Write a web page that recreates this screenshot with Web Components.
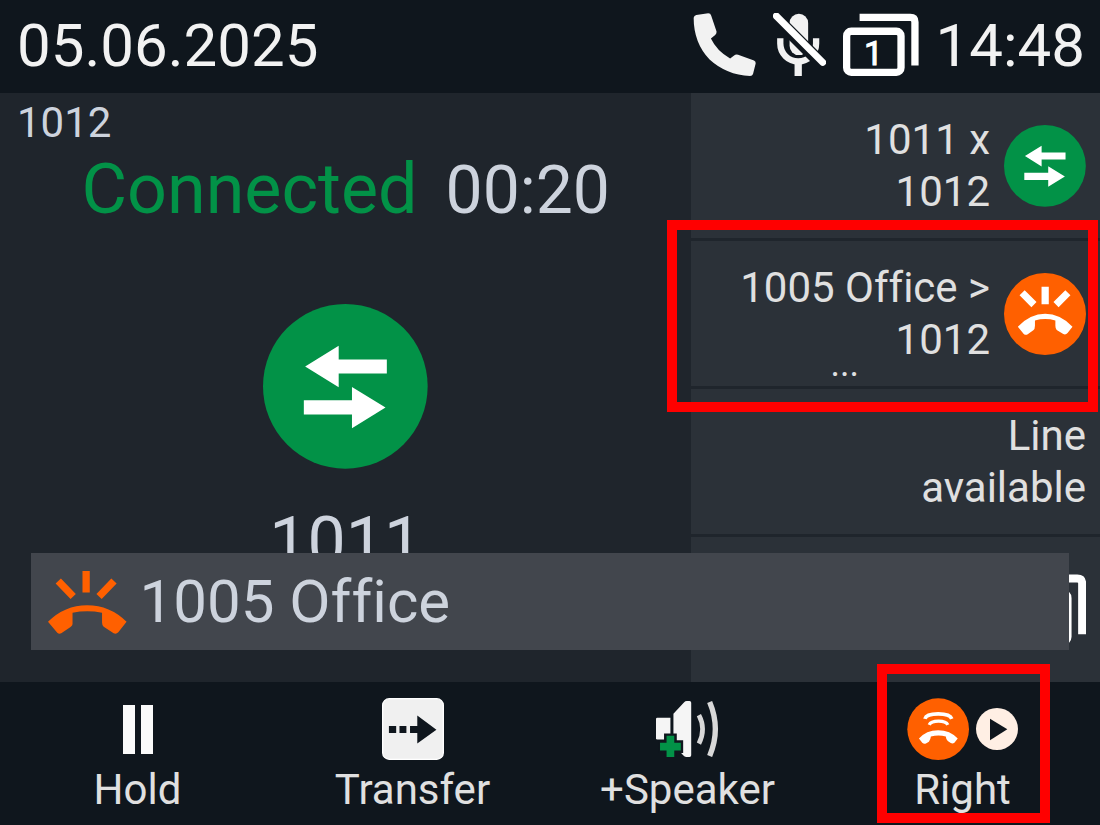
<!DOCTYPE html>
<html lang="en">
<head>
<meta charset="utf-8">
<meta name="viewport" content="width=device-width, initial-scale=1">
<title>Desk phone</title>
<style>
  :root {
    --bar: #0f161d;
    --panel: #1f252c;
    --key: #2b3138;
    --toast: #42464d;
    --green: #029247;
    --orange: #ff6000;
    --text: #e0e0e0;
    --text-cool: #cdd3dd;
    --mark: #ff0000;
  }
  body {
    margin: 0;
    background: var(--bar);
    color: var(--text);
    font-family: Roboto, "Liberation Sans", sans-serif;
    font-size: 42px;
    line-height: 52px;
    font-variant-ligatures: none;
  }
</style>
</head>
<body>
<phone-screen>
  <status-bar slot="top">
    <span>05.06.2025</span>
    <phone-icon slot="icons" name="call"></phone-icon>
    <phone-icon slot="icons" name="mic-off"></phone-icon>
    <phone-icon slot="icons" name="pages"></phone-icon>
    <span slot="time">14:48</span>
  </status-bar>

  <call-panel slot="call">
    <span slot="account">1012</span>
    <span slot="state">Connected</span>
    <span slot="timer">00:20</span>
    <phone-icon slot="icon" name="swap" style="--size: 165px"></phone-icon>
    <span slot="peer">1011</span>
  </call-panel>

  <line-key slot="lines">1011 x<br>1012<phone-icon slot="icon" name="swap" style="--size: 82px"></phone-icon></line-key>
  <line-key slot="lines" marked>1005 Office &gt;<br>1012<span slot="more">...</span><phone-icon slot="icon" name="ringing-round" style="--size: 82px"></phone-icon></line-key>
  <line-key slot="lines">Line<br>available</line-key>
  <line-key slot="lines" label="Next page"><phone-icon slot="icon" name="pages-blank" style="--size: 72px"></phone-icon></line-key>

  <call-toast slot="toast">
    <phone-icon slot="icon" name="ringing"></phone-icon>
    1005 Office
  </call-toast>

  <soft-key slot="keys"><phone-icon slot="icon" name="pause" style="--size: 49px"></phone-icon>Hold</soft-key>
  <soft-key slot="keys"><phone-icon slot="icon" name="transfer" style="--size: 62px"></phone-icon>Transfer</soft-key>
  <soft-key slot="keys"><phone-icon slot="icon" name="speaker" style="--size: 56px"></phone-icon>+Speaker</soft-key>
  <soft-key slot="keys" marked><phone-icon slot="icon" name="incoming" style="--size: 62px"></phone-icon><phone-icon slot="icon" name="play" style="--size: 42px"></phone-icon>Right</soft-key>
</phone-screen>

<script>
const icons = {
  call: `<svg viewBox="0 0 190 190" fill="#f2f2f2">
    <path d="M2 14Q3 8 10 6L46 1Q53 1 55 8L71 56Q72 62 67 66L54 77Q72 115 112 137L124 128Q129 124 136 126L184 143Q190 146 189 152L181 184Q179 190 172 190Q100 186 50 140Q2 90 2 14z"/></svg>`,
  "mic-off": `<svg viewBox="0 0 160 190" fill="none" stroke="#f2f2f2">
    <rect x="50" y="2" width="56" height="125" rx="28" fill="#f2f2f2" stroke="none"/>
    <path d="M22 76V92a54 54 0 0 0 108 0V76" stroke-width="19"/>
    <path d="M76 146V190" stroke-width="22"/>
    <path d="M0 6L150 156" stroke="var(--bar)" stroke-width="38"/>
    <path d="M10 9L150 149" stroke="#fff" stroke-width="21" stroke-linecap="round"/></svg>`,
  pages: `<svg viewBox="0 0 228 190" fill="none" stroke="#fff" stroke-width="22">
    <rect x="11" y="55" width="164" height="124" rx="14"/>
    <path d="M50 13H203Q217 13 217 27V158"/>
    <text x="92" y="158" text-anchor="middle" font-size="102" fill="#fff" stroke="#fff" stroke-width="3">1</text></svg>`,
  "pages-blank": `<svg viewBox="0 0 228 208" fill="none" stroke="#fff" stroke-width="23">
    <rect x="11" y="55" width="164" height="140" rx="14"/>
    <path d="M50 13H203Q217 13 217 27V174"/></svg>`,
  swap: `<svg viewBox="0 0 497 497" fill="#fff">
    <circle cx="248" cy="248" r="248" fill="var(--green)"/>
    <path d="M127 188L228 126V167H373V209H228V251z"/>
    <path d="M369 312L268 250V290H123V333H268V374z"/></svg>`,
  ringing: `<svg viewBox="0 0 237 190" fill="var(--orange)" stroke="var(--orange)" stroke-width="22">
    <path d="M115 0V65M31 30L76 77M199 30L154 77"/>
    <path stroke="none" d="M0 153Q50 103 118 103Q187 103 237 153L212 185Q206 191 198 188L168 168Q163 164 163 155V126Q118 117 74 126V160Q74 165 68 169L40 188Q33 191 28 186z"/></svg>`,
  "ringing-round": `<svg viewBox="0 0 249 249" fill="#fff" stroke="#fff" stroke-width="22">
    <circle cx="124.500" cy="124.500" r="124.500" fill="var(--orange)" stroke="none"/>
    <path d="M125 42V95M55 60L91 96M194 60L158 96"/>
    <path stroke="none" d="M42 163Q80 124 125 124Q170 124 208 163L193 182Q187 189 180 185L160 173Q156 169 156 160V144Q125 136 94 144V160Q94 170 89 174L72 186Q66 190 60 185z"/></svg>`,
  pause: `<svg viewBox="0 0 30 49" fill="#fafafa">
    <path d="M0 0H12V49H0zM18 0H30V49H18z"/></svg>`,
  transfer: `<svg viewBox="0 0 188 188" fill="#0f161d">
    <rect x="2" y="2" width="184" height="184" rx="20" fill="#f0f0f0" stroke="#fff" stroke-width="4"/>
    <path d="M21 85H43V106H21zM53 85H74V106H53zM85 85H107V53L165 96L107 138V106H85z"/></svg>`,
  speaker: `<svg viewBox="0 0 187 167" fill="#f5f5f5">
    <path d="M4 50H43V115H4Q0 115 0 111V54Q0 50 4 50z"/>
    <path d="M52 38L84 4Q87 0 92 0H100Q105 0 105 5V162Q105 167 100 167H90Q85 167 81 162L52 130z"/>
    <path d="M128 42Q150 84 128 127" fill="none" stroke="#d8d8d8" stroke-width="14"/>
    <path d="M160 3Q194 84 160 164" fill="none" stroke="#d8d8d8" stroke-width="16"/>
    <path d="M43 97V167M6 136H81" stroke="var(--bar)" stroke-width="38"/>
    <path d="M43 104V167M12 136H74" stroke="var(--green)" stroke-width="23"/></svg>`,
  incoming: `<svg viewBox="0 0 187 187" fill="none" stroke="#fff">
    <circle cx="94" cy="94" r="93" fill="var(--orange)" stroke="none"/>
    <path d="M54 63Q58 48 94 48Q130 48 135 63" stroke-width="11"/>
    <path d="M67 81Q72 70 95 70Q118 70 123 81" stroke-width="10"/>
    <path fill="#fff" stroke="none" d="M36 122Q58 97 94 97Q130 97 153 122L143 135Q138 139 132 136L123 130Q118 126 117 116Q95 110 72 116Q71 126 66 132L57 137Q51 139 46 135z"/></svg>`,
  play: `<svg viewBox="0 0 126 126" fill="#0f161d">
    <circle cx="63" cy="63" r="63" fill="#ffefe4"/>
    <path d="M42 32L94 64L42 97z"/></svg>`,
};

class PhoneIcon extends HTMLElement {
  constructor() {
    super();
    this.attachShadow({ mode: "open" });
  }

  connectedCallback() {
    this.shadowRoot.innerHTML = `
      <style>
        :host { display: block; flex: none; }
        svg { display: block; height: var(--size, 63px); width: auto; }
      </style>
      ${icons[this.getAttribute("name")]}
    `;
    this.setAttribute("aria-hidden", "true");
  }
}

// registers an element whose shadow root is a copy of the given markup
function define(name, html, setup) {
  const template = document.createElement("template");
  template.innerHTML = html;
  customElements.define(name, class extends HTMLElement {
    constructor() {
      super();
      this.attachShadow({ mode: "open" });
      this.shadowRoot.appendChild(template.content.cloneNode(true));
    }

    connectedCallback() {
      if (setup) setup(this);
    }
  });
}

const buttonReset = `
  button {
    box-sizing: border-box;
    width: 100%;
    height: 100%;
    margin: 0;
    border: 0;
    background: none;
    color: inherit;
    font: inherit;
    cursor: pointer;
  }
`;

customElements.define("phone-icon", PhoneIcon);

define("phone-screen", `
  <style>
    :host {
      display: flex;
      flex-direction: column;
      min-height: 100vh;
    }
    main {
      position: relative;
      flex: 1;
      display: grid;
      grid-template-columns: 22fr 13fr;
      background: var(--panel);
    }
    .lines {
      display: grid;
      grid-auto-rows: 1fr;
      gap: 3px;
    }
    .toast {
      position: absolute;
      left: 31px;
      right: 31px;
      bottom: 32px;
    }
    footer {
      display: grid;
      grid-template-columns: repeat(4, 1fr);
      background: var(--bar);
    }
  </style>
  <slot name="top"></slot>
  <main>
    <slot name="call"></slot>
    <div class="lines"><slot name="lines"></slot></div>
    <div class="toast"><slot name="toast"></slot></div>
  </main>
  <footer><slot name="keys"></slot></footer>
`);

define("status-bar", `
  <style>
    :host { display: block; }
    header {
      display: flex;
      align-items: center;
      justify-content: space-between;
      padding: 10px 15px 11px 17px;
      background: var(--bar);
      color: #f2f2f2;
      font-size: 60px;
      line-height: 72px;
    }
    .right,
    .icons {
      display: flex;
      align-items: center;
      gap: 17px;
    }
    .icons { padding-bottom: 4px; }
  </style>
  <header>
    <slot></slot>
    <div class="right">
      <div class="icons"><slot name="icons"></slot></div>
      <slot name="time"></slot>
    </div>
  </header>
`);

define("call-panel", `
  <style>
    :host { display: block; color: var(--text-cool); }
    section {
      display: flex;
      flex-direction: column;
      align-items: center;
      padding-top: 4px;
      font-size: 68px;
      line-height: 80px;
    }
    .account {
      align-self: flex-start;
      padding-left: 17px;
      font-size: 42px;
      line-height: 52px;
    }
    .state {
      display: flex;
      align-items: baseline;
      gap: 28px;
    }
    .name {
      color: var(--green);
      font-size: 70px;
    }
    .timer { font-size: 66px; }
    .icon { padding: 73px 0 33px; }
  </style>
  <section>
    <div class="account"><slot name="account"></slot></div>
    <div class="state">
      <span class="name"><slot name="state"></slot></span>
      <span class="timer"><slot name="timer"></slot></span>
    </div>
    <div class="icon"><slot name="icon"></slot></div>
    <slot name="peer"></slot>
  </section>
`);

define("line-key", `
  <style>
    ${buttonReset}
    :host {
      display: block;
      position: relative;
      background: var(--key);
    }
    button {
      position: relative;
      display: flex;
      align-items: center;
      gap: 14px;
      padding: 0 14px 0 10px;
      font-variant-ligatures: none;
      text-align: right;
    }
    .label { flex: 1; }
    .more {
      position: absolute;
      left: 8px;
      right: 110px;
      bottom: 4px;
      font-size: 36px;
      line-height: 36px;
      text-align: center;
    }
    :host([marked])::after {
      content: "";
      position: absolute;
      inset: -21px 2px -26px -24px;
      border: 10px solid var(--mark);
      pointer-events: none;
      z-index: 1;
    }
  </style>
  <button type="button">
    <span class="label"><slot></slot></span>
    <slot name="icon"></slot>
    <span class="more"><slot name="more"></slot></span>
  </button>
`, (host) => {
  const label = host.getAttribute("label");
  if (label) host.shadowRoot.querySelector("button").setAttribute("aria-label", label);
});

define("call-toast", `
  <style>
    :host { display: block; }
    div {
      display: flex;
      align-items: center;
      gap: 13px;
      padding: 13px 17px 12px;
      background: var(--toast);
      color: var(--text-cool);
      font-size: 60px;
      line-height: 72px;
    }
  </style>
  <div role="status">
    <slot name="icon"></slot>
    <span><slot></slot></span>
  </div>
`);

define("soft-key", `
  <style>
    ${buttonReset}
    :host {
      display: block;
      position: relative;
    }
    button {
      display: flex;
      flex-direction: column;
      align-items: center;
      gap: 4px;
      padding: 16px 0 9px;
    }
    .icons {
      display: flex;
      align-items: center;
      gap: 7px;
      height: 62px;
    }
    :host([marked])::after {
      content: "";
      position: absolute;
      inset: -18px 50px 2px 52px;
      border: 10px solid var(--mark);
      pointer-events: none;
    }
  </style>
  <button type="button">
    <span class="icons"><slot name="icon"></slot></span>
    <span><slot></slot></span>
  </button>
`);
</script>
</body>
</html>
